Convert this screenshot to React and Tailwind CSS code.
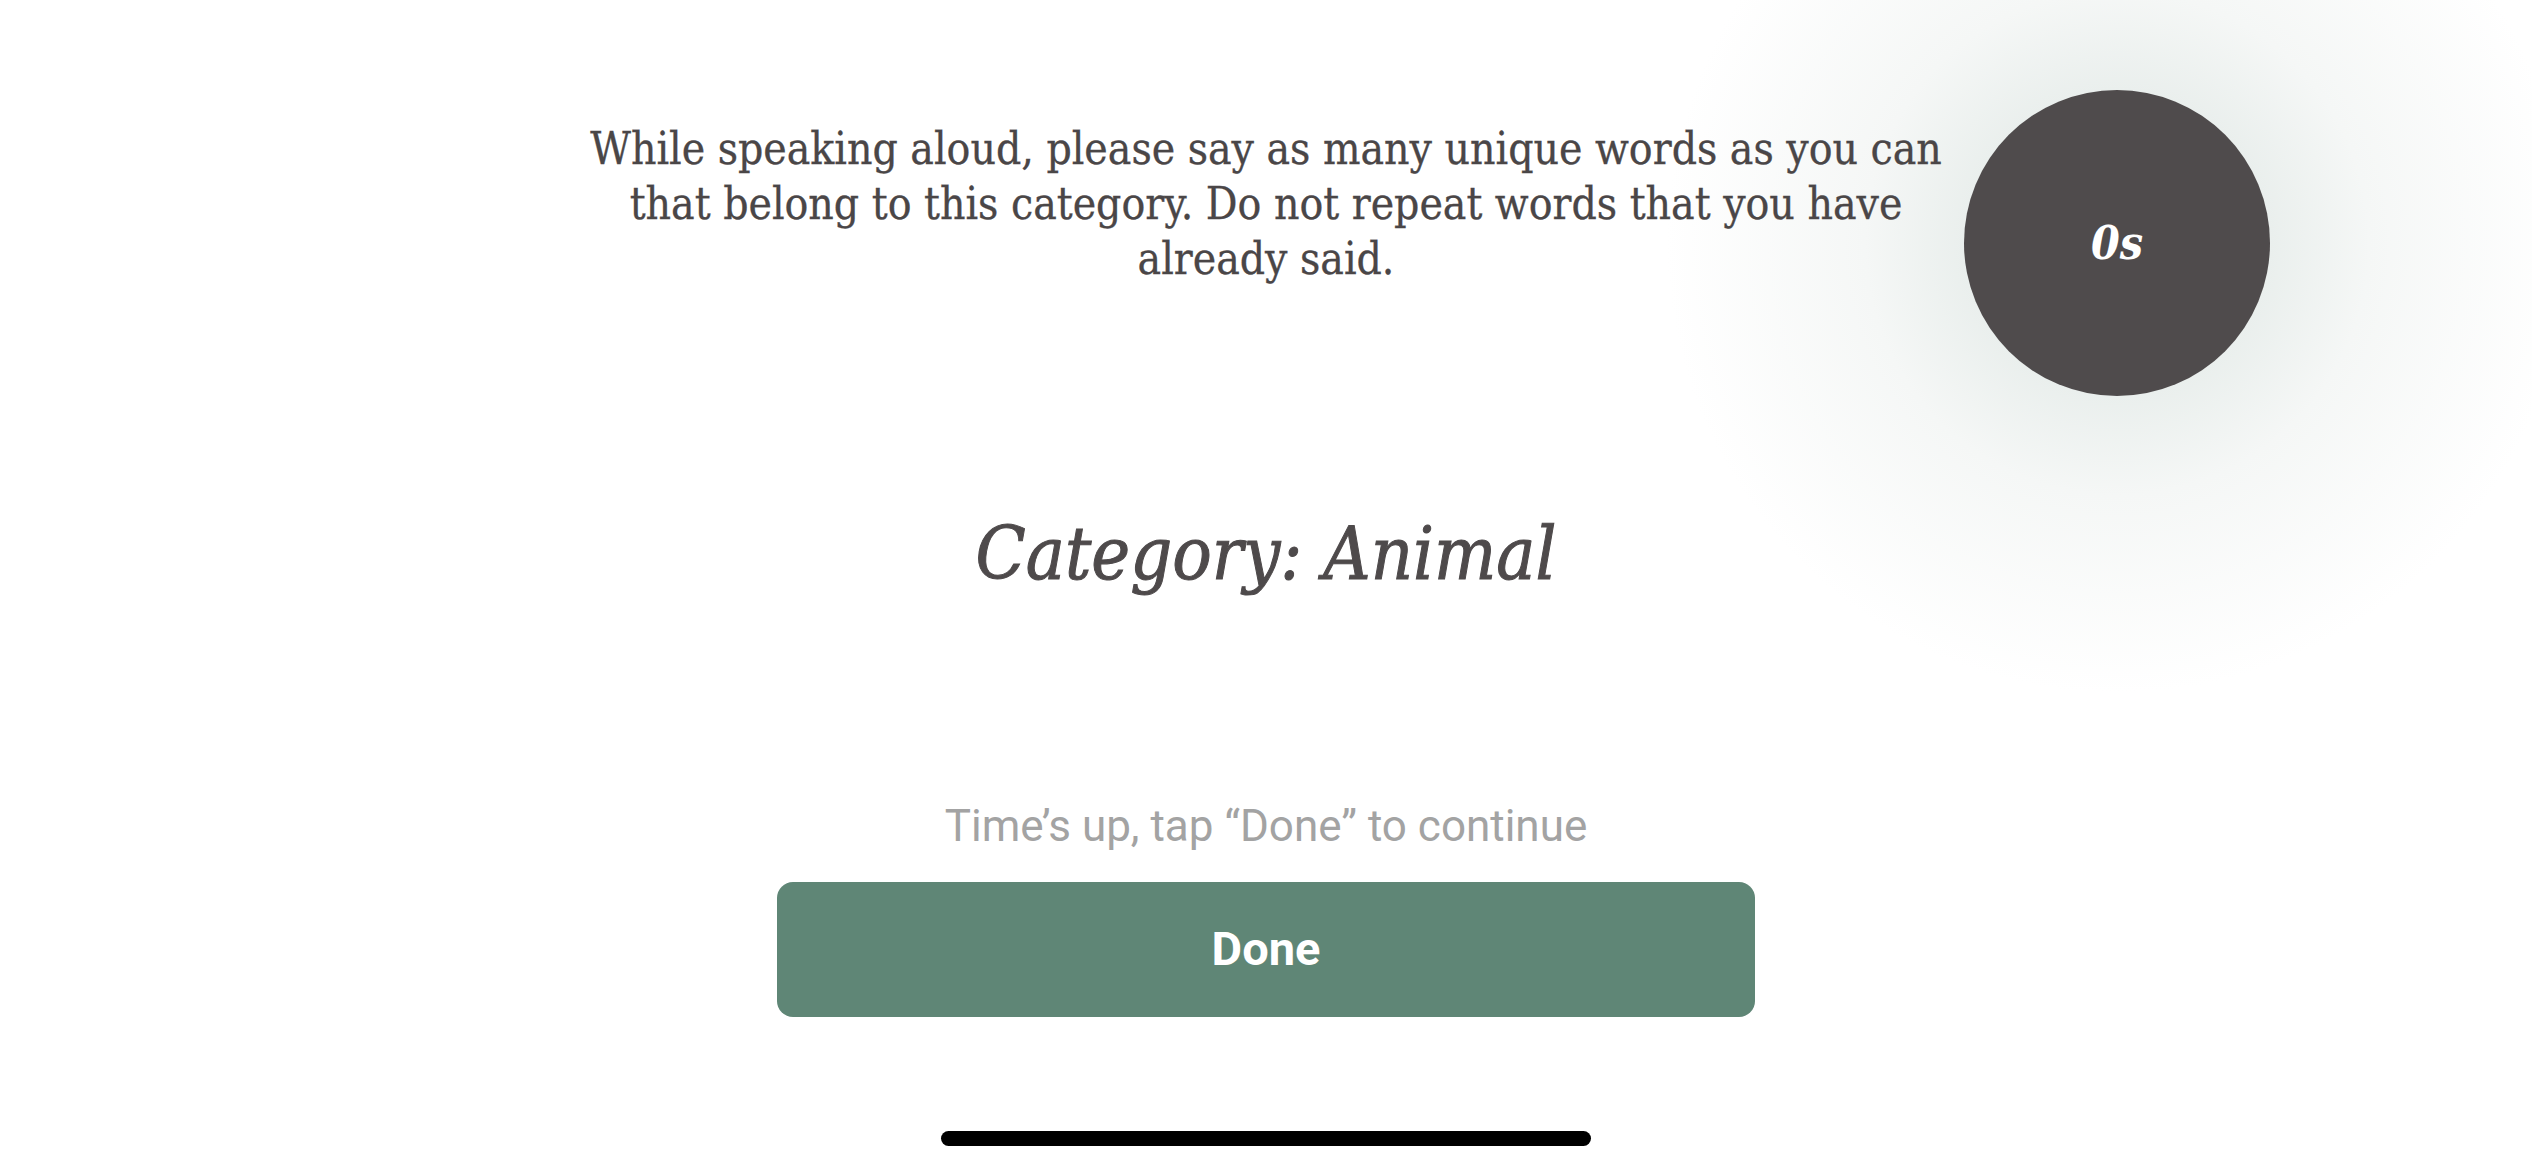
const serif = 'font-["DejaVu_Serif_Condensed","Liberation_Serif",serif]'

function Timer({ seconds }) {
  return (
    <div className="relative w-[306px] h-[306px]">
      {/* soft halo behind the dial */}
      <div className="absolute -inset-[297px] rounded-full bg-[radial-gradient(circle_closest-side,#eaefed_34%,#f5f7f6_56%,rgba(255,255,255,0)_100%)]" />
      <div className="relative w-full h-full rounded-full bg-[#4f4b4c] flex items-center justify-center">
        <span className={`${serif} italic font-bold text-[46px] leading-none text-white`}>{seconds}s</span>
      </div>
    </div>
  )
}

export default function App() {
  return (
    <div className="w-[2532px] h-[1170px] bg-white flex flex-col items-center overflow-hidden">
      <div className="w-full grid grid-cols-[1fr_1396px_1fr] pt-[90px]">
        <div />
        <p className={`${serif} relative z-10 mt-[31px] text-center text-[44px] leading-[55px] text-[#4a4647] [-webkit-text-stroke:0.3px_#4a4647]`}>
          While speaking aloud, please say as many unique words as you can
          <br />
          that belong to this category. Do not repeat words that you have
          <br />
          already said.
        </p>
        <div className="flex">
          <Timer seconds={0} />
        </div>
      </div>

      <h1 className={`${serif} relative mt-[121px] italic text-[73px] leading-none text-[#4e4a4b] [-webkit-text-stroke:1px_#4e4a4b]`}>
        Category: Animal
      </h1>

      <p className="mt-[214px] font-['Roboto',sans-serif] text-[44px] leading-none text-[#a3a3a3]">
        Time’s up, tap “Done” to continue
      </p>

      <button className="mt-[34px] w-[978px] h-[135px] rounded-[16px] bg-[#5f8676] flex items-center justify-center font-['Roboto',sans-serif] font-bold text-[47px] text-white">
        Done
      </button>

      <div className="mt-[114px] w-[650px] h-[15px] rounded-full bg-black" />
    </div>
  )
}
